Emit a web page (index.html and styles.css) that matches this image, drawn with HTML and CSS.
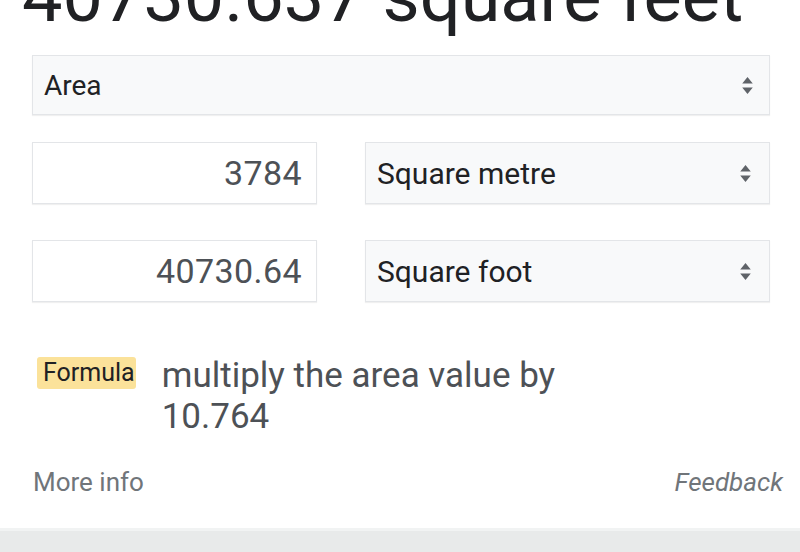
FILE: index.html
```html
<!DOCTYPE html>
<html lang="en">
<head>
<meta charset="utf-8">
<title>Area converter</title>
<link rel="stylesheet" href="styles.css">
</head>
<body>
<div class="card">
  <div class="result">40730.637 square feet</div>
  <div class="select wide">
    <span>Area</span>
    <svg class="arrows" width="12" height="18" viewBox="0 0 12 18"><path d="M6 1 L11 7 H1 Z M6 17 L11 11 H1 Z" fill="#5f6368"/></svg>
  </div>
  <div class="row">
    <div class="input">3784</div>
    <div class="select">
      <span>Square metre</span>
      <svg class="arrows" width="12" height="18" viewBox="0 0 12 18"><path d="M6 1 L11 7 H1 Z M6 17 L11 11 H1 Z" fill="#5f6368"/></svg>
    </div>
  </div>
  <div class="row">
    <div class="input">40730.64</div>
    <div class="select">
      <span>Square foot</span>
      <svg class="arrows" width="12" height="18" viewBox="0 0 12 18"><path d="M6 1 L11 7 H1 Z M6 17 L11 11 H1 Z" fill="#5f6368"/></svg>
    </div>
  </div>
  <div class="formula">
    <span class="badge">Formula</span>
    <p class="formula-text">multiply the area value by<br>10.764</p>
  </div>
  <div class="footer">
    <a class="more">More info</a>
    <a class="feedback">Feedback</a>
  </div>
</div>
<div class="band"></div>
</body>
</html>
```
FILE: styles.css
```css
html, body {
  margin: 0;
  padding: 0;
  background: #fff;
  font-family: Roboto, "Liberation Sans", Arial, sans-serif;
  overflow: hidden;
}
.card {
  padding: 0 30px 0 32px;
}
.result {
  font-size: 72px;
  line-height: 72px;
  height: 72px;
  margin-top: -39px;
  margin-left: -10px;
  color: #202124;
  white-space: nowrap;
}
.select {
  box-sizing: border-box;
  display: flex;
  align-items: center;
  justify-content: space-between;
  background: #f8f9fa;
  border: 1px solid #e3e5e8;
  box-shadow: 0 1px 1px rgba(0,0,0,0.06);
  color: #202124;
  font-size: 30px;
  padding: 0 17px 0 11px;
  height: 62px;
  flex: 1;
}
.select.wide {
  margin-top: 22px;
  height: 60px;
  font-size: 28px;
  padding-right: 15px;
}
.arrows {
  width: 13px;
  height: 19px;
}
.row {
  display: flex;
  gap: 48px;
  margin-top: 27px;
}
.row + .row {
  margin-top: 36px;
}
.input {
  box-sizing: border-box;
  width: 285px;
  height: 62px;
  border: 1px solid #e3e5e8;
  box-shadow: 0 1px 1px rgba(0,0,0,0.06);
  display: flex;
  align-items: center;
  justify-content: flex-end;
  padding-right: 14px;
  font-size: 34px;
  letter-spacing: 0.4px;
  color: #4d5156;
}
.formula {
  display: flex;
  align-items: flex-start;
  margin-top: 53px;
}
.badge {
  background: #fbe29a;
  color: #202124;
  font-size: 25px;
  line-height: 32px;
  padding: 0 1px 0 6px;
  margin-left: 5px;
  margin-top: 2px;
  border-radius: 3px;
}
.formula-text {
  margin: 0 0 0 26px;
  font-size: 35px;
  line-height: 41px;
  color: #4d5156;
}
.footer {
  display: flex;
  justify-content: space-between;
  margin-top: 30px;
  margin-right: -13px;
  font-size: 26px;
  color: #70757a;
}
.more {
  margin-left: 1px;
}
.feedback {
  font-style: italic;
}
.band {
  position: absolute;
  left: 0;
  right: 0;
  top: 528px;
  height: 24px;
  background: #e8eaea;
  border-top: 3px solid #f1f3f3;
  box-sizing: border-box;
}
```
